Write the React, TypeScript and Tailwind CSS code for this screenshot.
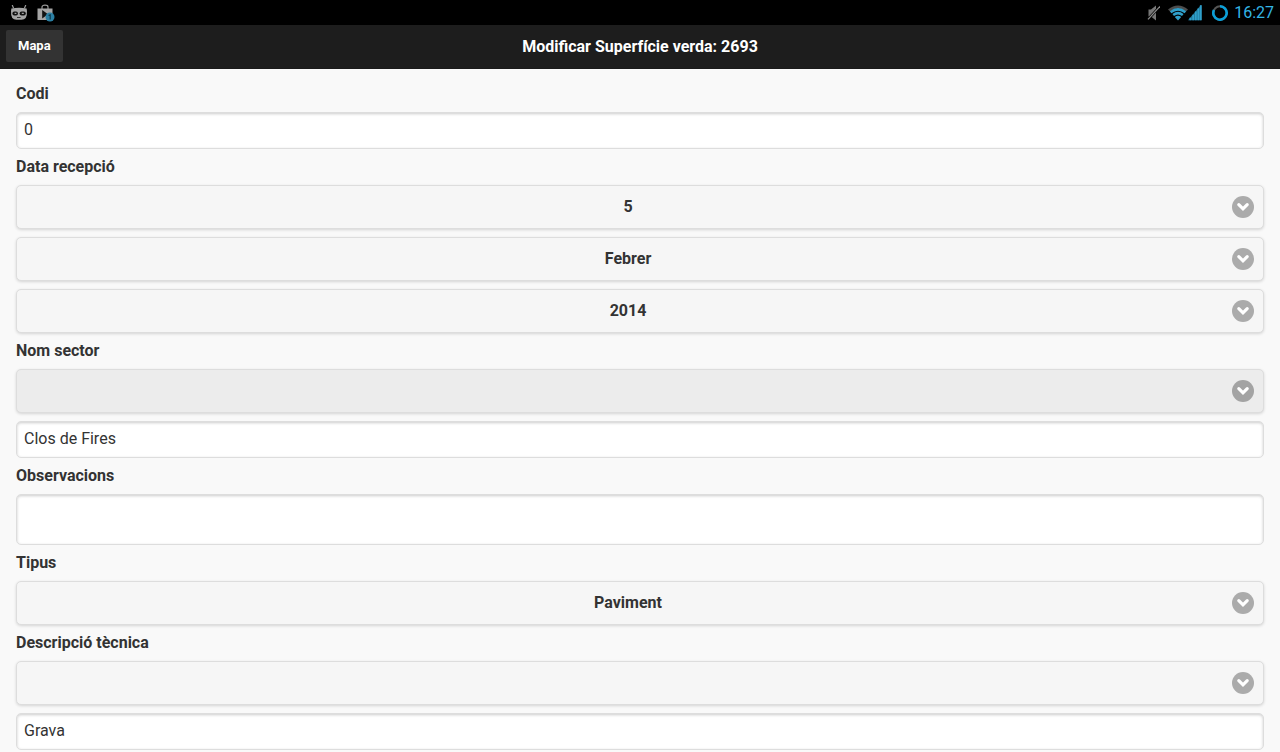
import React from 'react';

interface FieldProps {
  id: string;
  label: string;
}

function FieldLabel({ id, label }: FieldProps) {
  return (
    <label htmlFor={id} className="block h-9 text-base leading-9 font-bold">
      {label}
    </label>
  );
}

interface SelectFieldProps {
  id: string;
  options: string[];
  ariaLabel?: string;
  active?: boolean;
}

function SelectField({ id, options, ariaLabel, active = false }: SelectFieldProps) {
  return (
    <div className="relative">
      <select
        id={id}
        aria-label={ariaLabel}
        className={`block h-11 w-full appearance-none rounded-[5px] border border-[#dddddd] pr-10 pl-4 text-center text-base font-bold text-[#333333] shadow-[0_1px_3px_rgba(0,0,0,0.15)] ${
          active ? 'bg-[#ececec]' : 'bg-[#f6f6f6]'
        }`}
      >
        {options.map((option) => (
          <option key={option}>{option}</option>
        ))}
      </select>
      <svg
        aria-hidden="true"
        viewBox="0 0 22 22"
        className="pointer-events-none absolute top-[11px] right-2.5 size-[22px]"
      >
        <circle cx="11" cy="11" r="11" fill={active ? '#a3a3a3' : '#ababab'} />
        <path
          d="M6.8 8.6 11 12.8 15.2 8.6"
          fill="none"
          stroke="#fff"
          strokeWidth="3.2"
          strokeLinecap="round"
        />
      </svg>
    </div>
  );
}

function TextField({ id, value, ariaLabel }: { id: string; value: string; ariaLabel?: string }) {
  return (
    <input
      id={id}
      type="text"
      aria-label={ariaLabel}
      defaultValue={value}
      className="block h-[37px] w-full rounded-[5px] border border-[#dddddd] bg-white px-[7px] pb-0.5 text-base text-[#333333] shadow-[inset_0_1px_3px_rgba(0,0,0,0.2)]"
    />
  );
}

function StatusBar() {
  return (
    <div className="flex h-[25px] items-center bg-black pr-1.5 pl-2.5">
      <svg aria-hidden="true" viewBox="0 0 18 16" className="h-4 w-[18px]">
        <path d="M2.2 0 3.6 3.2M15.8 0 14.4 3.2" stroke="#999" strokeWidth="1.2" />
        <path d="M1.4 3.4Q9 2.2 16.6 3.4 17.4 6 16.8 10 16.2 13.4 14 14.2 9 15.2 4 14.2 1.8 13.4 1.2 10 .6 6 1.4 3.4Z" fill="#a5a5a5" />
        <rect x="2.4" y="6.4" width="5.6" height="4.2" rx="2" fill="#111" />
        <rect x="9.6" y="6.4" width="6.2" height="4.2" rx="2" fill="#111" />
        <path d="M4.6 8.4h1.8M11.8 8.4h2" stroke="#a5a5a5" strokeWidth="1.3" />
        <path d="M7 12.5h3.6" stroke="#333" />
      </svg>
      <svg aria-hidden="true" viewBox="0 0 18 18" className="ml-[9px] size-[18px]">
        <path d="M5 5V3Q5 1.2 8 1.2t3 1.8v2" fill="none" stroke="#999" strokeWidth="1.2" />
        <path d="M.5 4.5h15v11.5h-15z" fill="#a5a5a5" />
        <path d="m5.2 6 5.8 4.2-5.8 4.2z" fill="#111" />
        <circle cx="13" cy="13" r="4.5" fill="#2b7fa3" />
        <path d="m11.6 11.6 1.6-.8v4.6" fill="none" stroke="#0c3445" strokeWidth="1.1" />
      </svg>
      <div className="ml-auto flex items-center">
        <svg aria-hidden="true" viewBox="0 0 14 16" className="h-4 w-3.5">
          <path d="M2.5 4.6h2.5l5-4v14.8L5 11.4H2.5z" fill="#777" />
          <path d="M2 14.4 14 1.4" stroke="#000" strokeWidth="2.6" />
          <path d="M2 14.4 14 1.4" stroke="#8c8c8c" strokeWidth="1.3" />
        </svg>
        <svg aria-hidden="true" viewBox="0 0 34 16" className="ml-2 h-4 w-[34px]">
          <path d="M0 4.4Q10-3.6 20 4.4L18 6.4Q10 .6 2 6.4Z" fill="#4d4d4d" />
          <path d="M2.6 7.2Q10 1.6 17.4 7.2M5.2 10Q10 6.2 14.8 10" fill="none" stroke="#2f9fca" strokeWidth="2.5" />
          <path d="M6.8 12q3.2-2.4 6.4 0l-3.2 3.5z" fill="#2f9fca" />
          <path d="M20 15.2 33.4-.6V15.2Z" fill="#1f7496" />
          <path d="M22.4 15.2v-2.4M25.2 15.2V9.8M27.8 15.2V6.6M30.4 15.2V3.4M32.8 15.2V.2" stroke="#2f9fca" strokeWidth="1.8" />
        </svg>
        <svg aria-hidden="true" viewBox="0 0 16 16" className="ml-2.5 size-4">
          <circle cx="8" cy="8" r="6.7" fill="none" stroke="#555" strokeWidth="2" />
          <path d="M8 1.3A6.7 6.7 0 1 1 2 5" fill="none" stroke="#0a9fd8" strokeWidth="2.6" />
        </svg>
        <time className="ml-1.5 text-base leading-6 text-[#33b5e5]">16:27</time>
      </div>
    </div>
  );
}

export default function App() {
  return (
    <div className="min-h-screen bg-[#f9f9f9] font-['Roboto',sans-serif] text-[#333333]">
      <StatusBar />
      <header className="grid h-11 grid-cols-[1fr_auto_1fr] items-center border-b border-[#1a1a1a] bg-[#1d1d1d] px-1.5 text-white">
        <button
          type="button"
          className="mb-0.5 h-8 justify-self-start rounded-xs bg-[#333333] px-3 text-[13px] font-bold"
        >
          Mapa
        </button>
        <h1 className="text-base font-bold">Modificar Superfície verda: 2693</h1>
      </header>
      <form className="px-4 pt-[7px]">
        <FieldLabel id="codi" label="Codi" />
        <TextField id="codi" value="0" />

        <FieldLabel id="dia" label="Data recepció" />
        <div className="flex flex-col gap-2">
          <SelectField id="dia" options={['5']} />
          <SelectField id="mes" options={['Febrer']} ariaLabel="Mes" />
          <SelectField id="any" options={['2014']} ariaLabel="Any" />
        </div>

        <FieldLabel id="sector" label="Nom sector" />
        <div className="flex flex-col gap-2">
          <SelectField id="sector" options={['']} active />
          <TextField id="sector-nom" value="Clos de Fires" ariaLabel="Nom sector" />
        </div>

        <FieldLabel id="observacions" label="Observacions" />
        <textarea
          id="observacions"
          className="block h-[51px] w-full resize-none rounded-[5px] border border-[#dddddd] bg-white px-[7px] py-1.5 text-base shadow-[inset_0_1px_3px_rgba(0,0,0,0.2)]"
        />

        <FieldLabel id="tipus" label="Tipus" />
        <SelectField id="tipus" options={['Paviment']} />

        <FieldLabel id="descripcio" label="Descripció tècnica" />
        <div className="flex flex-col gap-2">
          <SelectField id="descripcio" options={['']} />
          <TextField id="descripcio-nom" value="Grava" ariaLabel="Descripció tècnica" />
        </div>
      </form>
    </div>
  );
}
